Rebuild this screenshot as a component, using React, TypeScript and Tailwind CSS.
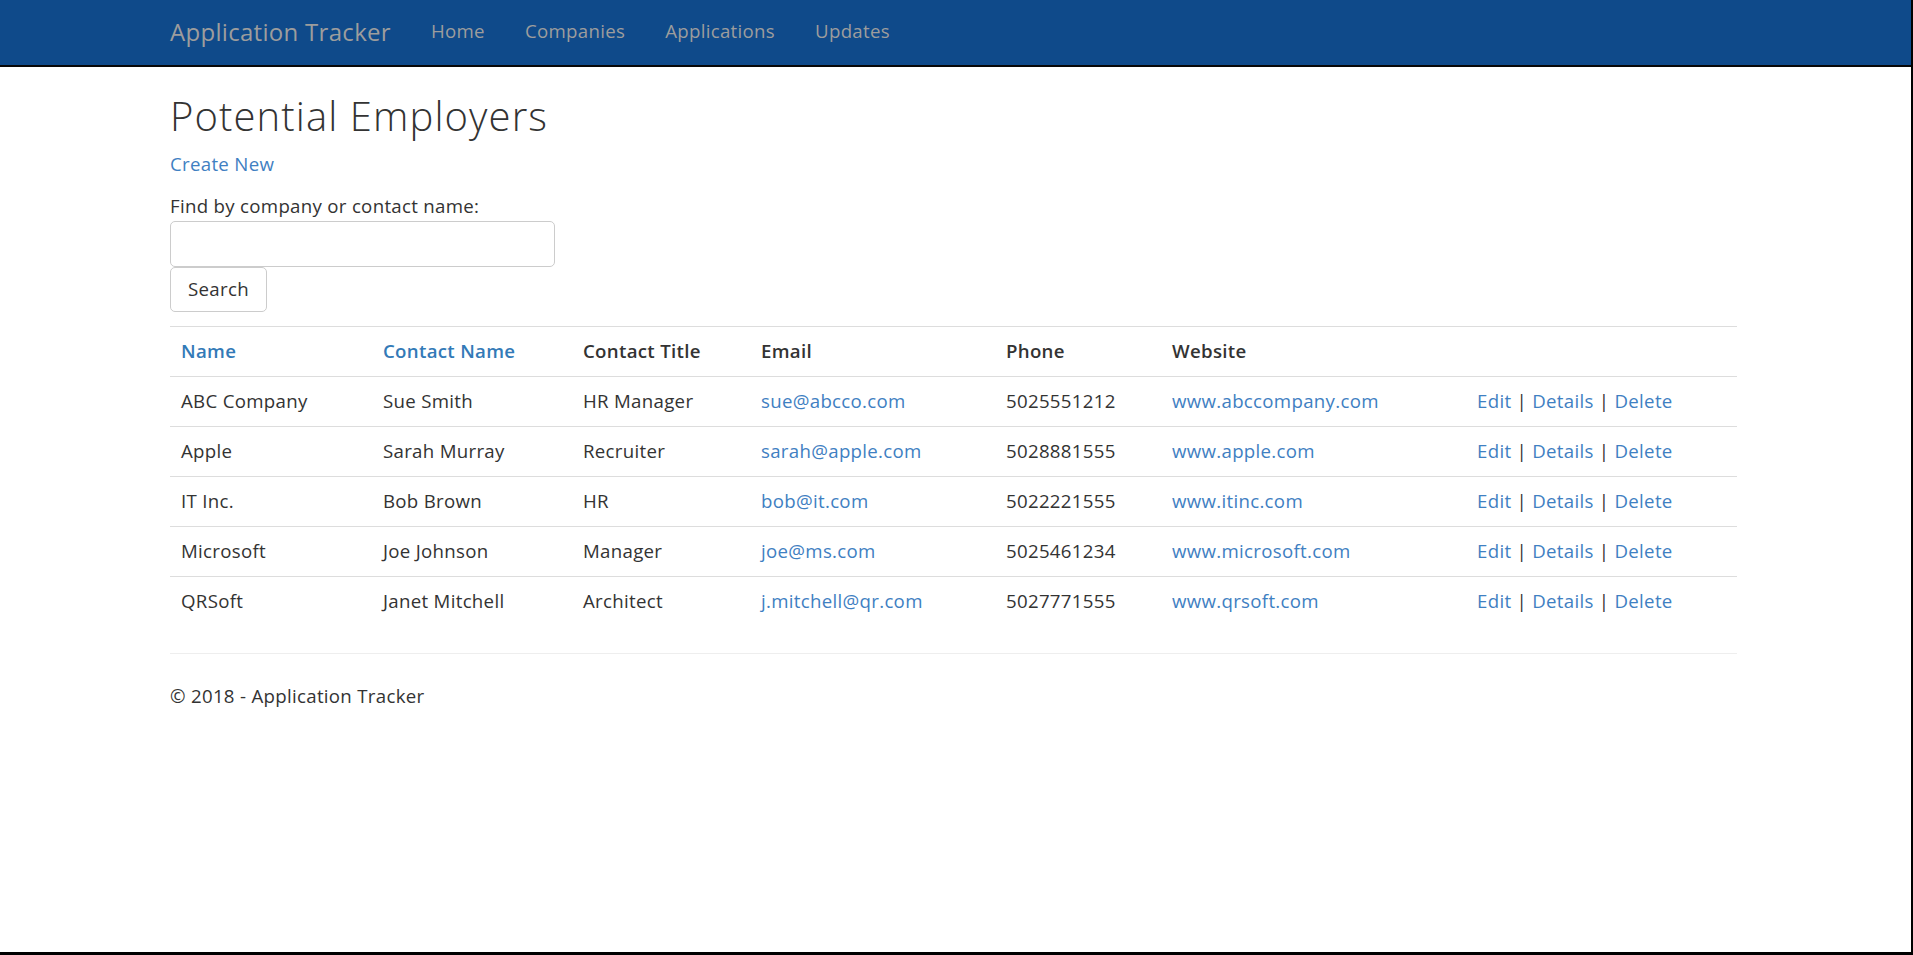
import React from "react";

const rows = [
  { name: "ABC Company", contact: "Sue Smith", title: "HR Manager", email: "sue@abcco.com", phone: "5025551212", web: "www.abccompany.com" },
  { name: "Apple", contact: "Sarah Murray", title: "Recruiter", email: "sarah@apple.com", phone: "5028881555", web: "www.apple.com" },
  { name: "IT Inc.", contact: "Bob Brown", title: "HR", email: "bob@it.com", phone: "5022221555", web: "www.itinc.com" },
  { name: "Microsoft", contact: "Joe Johnson", title: "Manager", email: "joe@ms.com", phone: "5025461234", web: "www.microsoft.com" },
  { name: "QRSoft", contact: "Janet Mitchell", title: "Architect", email: "j.mitchell@qr.com", phone: "5027771555", web: "www.qrsoft.com" },
];

export default function App() {
  return (
    <div
      className="w-[1913px] h-[955px] overflow-hidden bg-white border-r-2 border-b-[3px] border-black text-[#333] text-[18.67px] leading-[26.67px] tracking-[0.3px]"
      style={{ fontFamily: '"Open Sans", "Noto Sans", Arial, sans-serif' }}
    >
      <nav className="h-[67px] bg-[#0f4a8a] border-b-2 border-[#080808]">
        <div className="ml-[170px] flex items-center h-full pb-[2px]">
          <a className="text-[24px] leading-[26px] text-[#9d9d9d] tracking-[0.3px] pr-[20px]" href="#">Application Tracker</a>
          <a className="px-[20px] text-[#9d9d9d]" href="#">Home</a>
          <a className="px-[20px] text-[#9d9d9d]" href="#">Companies</a>
          <a className="px-[20px] text-[#9d9d9d]" href="#">Applications</a>
          <a className="px-[20px] text-[#9d9d9d]" href="#">Updates</a>
        </div>
      </nav>

      <main className="ml-[170px] w-[1567px]">
        <h2 className="mt-[27px] mb-[13px] text-[40px] leading-[44px] font-light tracking-[1.1px] text-[#333]">Potential Employers</h2>
        <p className="mb-[14px] mt-[1px]">
          <a href="#" className="text-[#3f80c2]">Create New</a>
        </p>
        <div className="flex flex-col items-start">
          <label className="block h-[27px] mb-[1px] mt-[1px]">Find by company or contact name:</label>
          <input className="w-[385px] h-[46px] border border-[#ccc] rounded-[5px] px-3 outline-none" />
          <button className="w-[97px] h-[45px] border border-[#ccc] rounded-[5px] bg-white text-[#333]">Search</button>
        </div>

        <table className="mt-[14px] w-[1567px] table-fixed border-collapse">
          <colgroup>
            <col className="w-[202px]" />
            <col className="w-[200px]" />
            <col className="w-[178px]" />
            <col className="w-[245px]" />
            <col className="w-[166px]" />
            <col className="w-[305px]" />
            <col className="w-[271px]" />
          </colgroup>
          <thead>
            <tr className="border-t border-[#ddd]">
              <th className="h-[50px] px-[11px] text-left font-semibold"><a href="#" className="text-[#337ab7]">Name</a></th>
              <th className="h-[50px] px-[11px] text-left font-semibold"><a href="#" className="text-[#337ab7]">Contact Name</a></th>
              <th className="h-[50px] px-[11px] text-left font-semibold">Contact Title</th>
              <th className="h-[50px] px-[11px] text-left font-semibold">Email</th>
              <th className="h-[50px] px-[11px] text-left font-semibold">Phone</th>
              <th className="h-[50px] px-[11px] text-left font-semibold">Website</th>
              <th className="h-[50px] px-[11px] text-left font-semibold"></th>
            </tr>
          </thead>
          <tbody>
            {rows.map((r) => (
              <tr key={r.name} className="border-t border-[#ddd]">
                <td className="h-[50px] px-[11px] whitespace-nowrap">{r.name}</td>
                <td className="h-[50px] px-[11px] whitespace-nowrap">{r.contact}</td>
                <td className="h-[50px] px-[11px] whitespace-nowrap">{r.title}</td>
                <td className="h-[50px] px-[11px] whitespace-nowrap"><a href="#" className="text-[#3f80c2]">{r.email}</a></td>
                <td className="h-[50px] px-[11px] whitespace-nowrap">{r.phone}</td>
                <td className="h-[50px] px-[11px] whitespace-nowrap"><a href="#" className="text-[#3f80c2]">{r.web}</a></td>
                <td className="h-[50px] px-[11px] whitespace-nowrap">
                  <a href="#" className="text-[#3f80c2]">Edit</a> | <a href="#" className="text-[#3f80c2]">Details</a> | <a href="#" className="text-[#3f80c2]">Delete</a>
                </td>
              </tr>
            ))}
          </tbody>
        </table>

        <hr className="mt-[27px] mb-[29px] border-0 border-t border-[#eee]" />
        <footer>
          <p>© 2018 - Application Tracker</p>
        </footer>
      </main>
    </div>
  );
}
